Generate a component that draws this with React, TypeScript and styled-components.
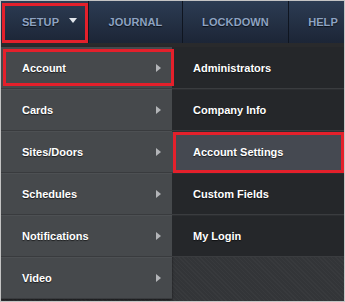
import React from 'react';
import styled, { createGlobalStyle } from 'styled-components';

const GlobalStyle = createGlobalStyle`
  html, body {
    margin: 0;
    padding: 0;
    background: #ffffff;
  }
  * {
    box-sizing: border-box;
  }
`;

const Frame = styled.div`
  width: 345px;
  height: 302px;
  border: 1px solid #c4c4c4;
  overflow: hidden;
  display: flex;
  flex-direction: column;
  font-family: 'Liberation Sans', Arial, sans-serif;
  background-color: #333538;
  background-image: repeating-linear-gradient(
    45deg,
    rgba(255, 255, 255, 0.025) 0 1px,
    transparent 1px 3px
  );
`;

const NavBar = styled.nav`
  height: 42px;
  flex: none;
  display: flex;
  background: linear-gradient(#2c3c53, #1c2536);
  border-bottom: 4px solid #292a2c;
  box-sizing: content-box;
`;

const NavItem = styled.div<{ $w: number; $active?: boolean }>`
  position: relative;
  flex: none;
  width: ${(p) => p.$w}px;
  display: flex;
  align-items: center;
  justify-content: center;
  gap: 10px;
  padding-left: ${(p) => (p.$active ? 10 : 0)}px;
  border-right: 1px solid #0f1520;
  color: #8ea3c2;
  font-size: 11px;
  font-weight: bold;
  letter-spacing: 0.1px;
  text-shadow: 0 1px 1px rgba(0, 0, 0, 0.7);
`;

const Caret = styled.span`
  width: 0;
  height: 0;
  border-left: 4px solid transparent;
  border-right: 4px solid transparent;
  border-top: 5px solid #e2e6ec;
  margin-top: -3px;
`;

const Highlight = styled.span<{ $t: number; $r: number; $b: number; $l: number }>`
  position: absolute;
  top: ${(p) => p.$t}px;
  right: ${(p) => p.$r}px;
  bottom: ${(p) => p.$b}px;
  left: ${(p) => p.$l}px;
  border: 3px solid #e4202b;
  pointer-events: none;
  z-index: 2;
`;

const Dropdown = styled.div`
  display: flex;
  align-items: flex-start;
`;

const MainMenu = styled.ul`
  list-style: none;
  margin: 0;
  padding: 0;
  width: 171px;
  flex: none;
  background: #46494c;
  box-shadow: 0 1px 2px rgba(0, 0, 0, 0.6);
`;

const SubMenu = styled.ul`
  list-style: none;
  margin: 0;
  padding: 0;
  flex: 1;
  background: #25272a;
`;

const MenuRow = styled.li<{ $sub?: boolean; $selected?: boolean }>`
  position: relative;
  height: 42px;
  display: flex;
  align-items: center;
  justify-content: space-between;
  padding: 0 11px 0 21px;
  color: #ffffff;
  font-size: 11px;
  font-weight: bold;
  text-shadow: 0 1px 1px rgba(0, 0, 0, 0.6);
  background: ${(p) => (p.$selected ? '#454951' : 'transparent')};
  border-top: 1px solid ${(p) => (p.$sub ? '#2c2e31' : '#4d5053')};
  border-bottom: 1px solid ${(p) => (p.$sub ? '#3a3c3f' : '#393b3e')};
  &:first-child {
    border-top-color: transparent;
  }
`;

const Arrow = styled.span`
  width: 0;
  height: 0;
  border-top: 4px solid transparent;
  border-bottom: 4px solid transparent;
  border-left: 5px solid #b3b5b8;
`;

const mainItems = ['Account', 'Cards', 'Sites/Doors', 'Schedules', 'Notifications', 'Video'];
const subItems = ['Administrators', 'Company Info', 'Account Settings', 'Custom Fields', 'My Login'];

export default function App() {
  return (
    <>
      <GlobalStyle />
      <Frame>
        <NavBar>
          <NavItem $w={88} $active>
            SETUP
            <Caret />
            <Highlight $t={2} $r={0} $b={0} $l={1} />
          </NavItem>
          <NavItem $w={94}>JOURNAL</NavItem>
          <NavItem $w={106}>LOCKDOWN</NavItem>
          <NavItem $w={69}>HELP</NavItem>
        </NavBar>
        <Dropdown>
          <MainMenu>
            {mainItems.map((label, i) => (
              <MenuRow key={label}>
                {label}
                <Arrow />
                {i === 0 && <Highlight $t={1} $r={-2} $b={2} $l={2} />}
              </MenuRow>
            ))}
          </MainMenu>
          <SubMenu>
            {subItems.map((label, i) => (
              <MenuRow key={label} $sub $selected={i === 2}>
                {label}
                {i === 2 && <Highlight $t={0} $r={0} $b={-1} $l={1} />}
              </MenuRow>
            ))}
          </SubMenu>
        </Dropdown>
      </Frame>
    </>
  );
}
